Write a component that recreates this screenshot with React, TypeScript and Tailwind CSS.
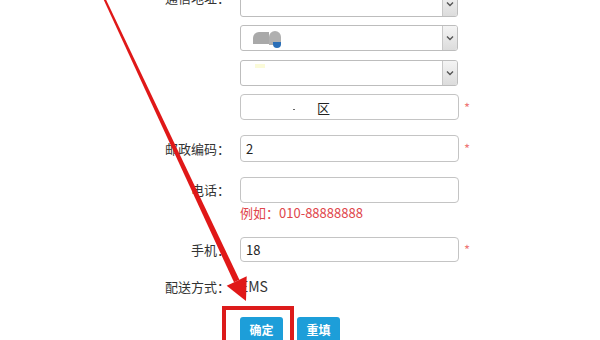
import React from 'react';

const font = { fontFamily: '"Noto Sans CJK SC", "Noto Sans", sans-serif' };

function Chevron() {
  return (
    <div className="w-[15px] h-full bg-gradient-to-b from-[#f4f4f4] to-[#dcdcdc] border-l border-[#c8c8c8] flex items-center justify-center">
      <svg width="8" height="6" viewBox="0 0 8 6">
        <path d="M1 1.5 L4 4.5 L7 1.5" fill="none" stroke="#555" strokeWidth="1.4" />
      </svg>
    </div>
  );
}

function Select({ children }: { children?: React.ReactNode }) {
  return (
    <div className="w-[218px] h-[26px] border border-[#bdbdbd] rounded-[3px] bg-white flex items-stretch overflow-hidden">
      <div className="flex-1 relative flex items-center pl-[12px]">{children}</div>
      <Chevron />
    </div>
  );
}

function Input({ value, children, h = 'h-[26px]' }: { value?: string; children?: React.ReactNode; h?: string }) {
  return (
    <div className={`w-[219px] ${h} border border-[#c4c4c4] rounded-[4px] bg-white flex items-center pl-[5px] text-[13px] text-[#222] relative`}>
      {value}
      {children}
    </div>
  );
}

function Star() {
  return <span className="ml-[5px] text-[#e77] text-[13px] leading-none">*</span>;
}

function Row({ label, children, className = '', labelClass = '' }: { label?: string; children: React.ReactNode; className?: string; labelClass?: string }) {
  return (
    <div className={`flex items-center ${className}`}>
      <div className={`w-[230px] text-right text-[13px] text-[#333] ${labelClass}`}>{label}</div>
      <div className="ml-[10px] flex items-center">{children}</div>
    </div>
  );
}

export default function App() {
  return (
    <div className="relative w-[600px] h-[340px] bg-white overflow-hidden" style={font}>
      <div className="-mt-[9px]">
        <Row label="通信地址：" labelClass="-mt-[12px]">
          <Select />
        </Row>
        <Row className="mt-[8px]">
          <Select>
            <div className="w-[16px] h-[12px] bg-[#a9a9a9] rounded-tl-[6px]" />
            <div className="w-[12px] h-[14px] bg-[#b0b0b0] rounded-t-[6px] relative">
              <div className="absolute right-0 bottom-[-3px] w-[8px] h-[6px] bg-[#2a6fb8] rounded-b-[4px]" />
            </div>
          </Select>
        </Row>
        <Row className="mt-[9px]">
          <Select>
            <div className="absolute left-[14px] top-[3px] w-[10px] h-[4px] bg-[#fbfbd9]" />
          </Select>
        </Row>
        <Row className="mt-[8px]">
          <Input>
            <span className="absolute left-[52px] top-[14px] w-[2px] h-[1px] bg-[#666]" />
            <span className="absolute left-[76px] top-[3px] text-[13px]">区</span>
          </Input>
          <Star />
        </Row>
        <Row label="邮政编码：" className="mt-[15px]">
          <Input value="2" h="h-[27px]" />
          <Star />
        </Row>
        <Row label="电话：" className="mt-[15px]">
          <Input />
        </Row>
        <Row className="h-[20px]">
          <span className="text-[13px] leading-[20px] text-[#e0464b]">例如：010-88888888</span>
        </Row>
        <Row label="手机：" className="mt-[14px]">
          <Input value="18" h="h-[25px]" />
          <Star />
        </Row>
        <Row label="配送方式：" className="mt-[14px] h-[21px]">
          <span className="text-[14px] text-[#333]">EMS</span>
        </Row>
        <div className="mt-[20px] flex pl-[240px] gap-[14px]">
          <button className="w-[43px] h-[26px] bg-[#1d9ed9] rounded-[3px] text-white text-[12px] font-bold leading-none">确定</button>
          <button className="w-[43px] h-[26px] bg-[#1d9ed9] rounded-[3px] text-white text-[12px] font-bold leading-none">重填</button>
        </div>
      </div>

      <div className="absolute left-[222px] top-[306px] w-[72px] h-[50px] border-[4px] border-[#dc1b1b]" />

      <svg className="absolute left-0 top-0" width="600" height="340" viewBox="0 0 600 340">
        <polygon points="103.8,0 106.2,0 239.4,279.7 234,282.3" fill="#e01818" />
        <polygon points="246,301 246.7,276.3 226.7,285.7" fill="#e01818" />
      </svg>
    </div>
  );
}
